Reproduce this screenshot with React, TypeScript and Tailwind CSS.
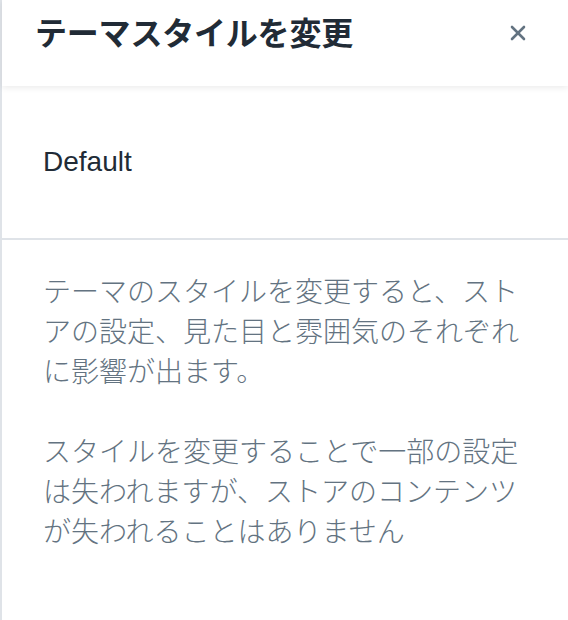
import { X } from 'lucide-react';

const font = { fontFamily: '"Liberation Sans", "Noto Sans CJK JP", sans-serif' };

export default function App() {
  return (
    <div className="min-h-[620px] w-[568px] bg-white border-l-2 border-[#dfe3e8] text-[#212b36]" style={font}>
      {/* Header */}
      <div className="relative z-10 flex items-start justify-between h-[86px] pl-[33px] pr-[38px] pt-[14px] bg-white shadow-[0_2px_6px_rgba(0,0,0,0.08)]">
        <h2 className="text-[32px] leading-[40px] font-bold tracking-[-0.2px]">テーマスタイルを変更</h2>
        <button className="mt-[7px] text-[#637381]" title="Close">
          <X size={24} strokeWidth={2.6} />
        </button>
      </div>

      {/* Current style */}
      <div className="px-[41px] py-14 border-b-2 border-[#dfe3e8]">
        <p className="text-[28px] leading-[40px]">Default</p>
      </div>

      {/* Description */}
      <div className="pl-[41px] pr-[40px] pt-[33px] pb-10 text-[28px] leading-[40px] font-light text-[#637381]">
        <p className="mb-10">テーマのスタイルを変更すると、ストアの設定、見た目と雰囲気のそれぞれに影響が出ます。</p>
        <p>スタイルを変更することで一部の設定は失われますが、ストアのコンテンツが失われることはありません</p>
      </div>
    </div>
  );
}
